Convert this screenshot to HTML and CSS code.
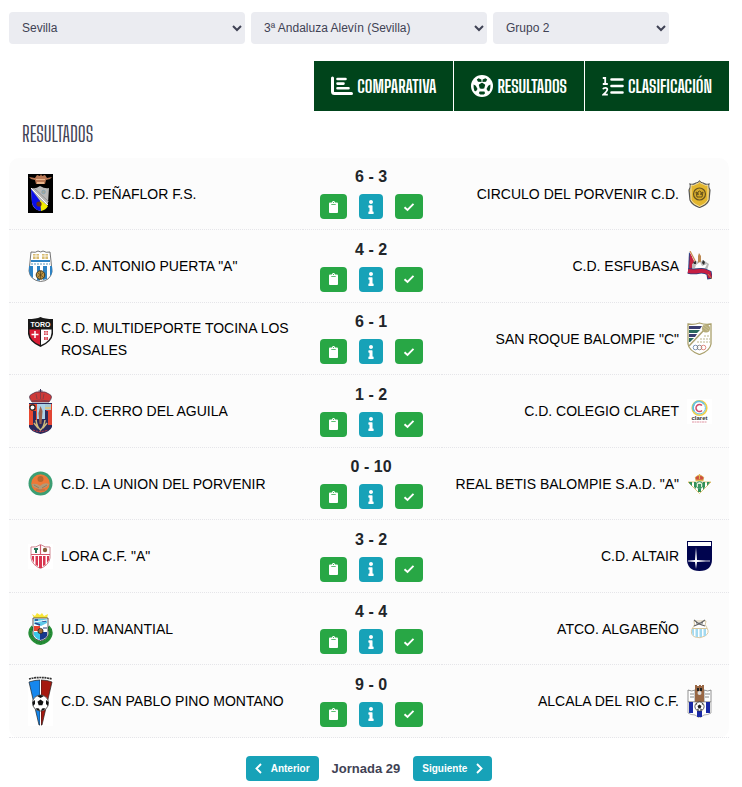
FILE: index.html
```html
<!DOCTYPE html>
<html lang="es">
<head>
<meta charset="UTF-8">
<meta name="viewport" content="width=device-width, initial-scale=1">
<title>Resultados</title>
<link rel="stylesheet" href="styles.css">
</head>
<body>

<!-- iconos compartidos -->
<svg class="sprite" aria-hidden="true">
  <symbol id="i-clip" viewBox="0 0 384 512"><path fill="currentColor" d="M384 112v352c0 26.500-21.500 48-48 48H48c-26.500 0-48-21.500-48-48V112c0-26.500 21.500-48 48-48h80c0-35.300 28.700-64 64-64s64 28.700 64 64h80c26.500 0 48 21.500 48 48zM192 40c-13.300 0-24 10.700-24 24s10.700 24 24 24 24-10.700 24-24-10.700-24-24-24m96 114v-20a6 6 0 0 0-6-6H102a6 6 0 0 0-6 6v20a6 6 0 0 0 6 6h180a6 6 0 0 0 6-6z"/></symbol>
  <symbol id="i-info" viewBox="0 0 192 512"><path fill="currentColor" d="M20 424.200h20V279.800H20c-11 0-20-9-20-20V212c0-11 9-20 20-20h112c11 0 20 9 20 20v212.200h20c11 0 20 9 20 20V492c0 11-9 20-20 20H20c-11 0-20-9-20-20v-47.800c0-11 9-20 20-20zM96 0C56.200 0 24 32.200 24 72s32.200 72 72 72 72-32.200 72-72S135.800 0 96 0z"/></symbol>
  <symbol id="i-check" viewBox="0 0 12 10"><path d="M1.500 5.200 4.500 8 10.500 1.800" fill="none" stroke="currentColor" stroke-width="1.900"/></symbol>
</svg>

<form class="filters">
  <select aria-label="Provincia"><option>Sevilla</option></select>
  <select aria-label="Competición"><option>3ª Andaluza Alevín (Sevilla)</option></select>
  <select class="short" aria-label="Grupo"><option>Grupo 2</option></select>
</form>

<nav class="tabs">
  <a href="#comparativa">
    <svg width="22" height="20" viewBox="0 0 22 20"><g fill="none" stroke="#fff" stroke-linecap="round"><path stroke-width="3" d="M1.500 2v13.500q0 2 2 2h17"/><path stroke-width="2.600" d="M6.500 3h8M6.500 7.600h6M6.500 12.200h11"/></g></svg>
    Comparativa
  </a>
  <a href="#resultados">
    <svg width="22" height="22" viewBox="0 0 22 22"><circle cx="11" cy="11" r="11" fill="#fff"/><path fill="#00441b" d="M11 7.400l3.300 2.400-1.200 3.900H8.900L7.700 9.800zM7.500 3.300l3.500 1.500 3.500-1.500 1.700 1.300-1.200 2.200-4 .3-4-.3-1.200-2.200zM2.600 9.500l2.200 1.200 1.700 3.400-1.500 2.200-1.500-.4Q2.300 13 2.600 9.500zM19.400 9.500l-2.200 1.200-1.700 3.400 1.500 2.200 1.500-.4q1.200-2.900.9-6.400zM8.600 16.500h4.800l.7 1.700-1.300 1.200H9.200l-1.300-1.200z"/><path fill="none" stroke="#fff" d="M11 8V4M8 10 4.500 8M14 10l3.500-2M9 13.500l-2.500 3M13 13.500l2.500 3"/></svg>
    Resultados
  </a>
  <a href="#clasificacion">
    <svg width="22" height="20" viewBox="0 0 22 20"><path stroke="#fff" stroke-width="2.600" stroke-linecap="round" d="M9.500 3.500h11M9.500 10h11M9.500 16.500h11"/><path fill="none" stroke="#fff" stroke-width="1.800" d="M.8 2h2.400v6M.8 8h5M1 13.200q.5-1.400 2.300-1.400 2 0 2 1.600 0 1.300-4 5.300h4.500"/></svg>
    Clasificación
  </a>
</nav>

<h1>Resultados</h1>

<table class="results">
  <tr>
    <td><div class="team">
      <svg width="25" height="39" viewBox="0 0 25 39"><path d="M0 0h25v39H0z"/><path fill="#b97855" d="M1 3l6 1 2-3 3 1 1-2 1 2 3-1 2 3 5-1-2 2-4 1-1 4H8L7 6 3 5z"/><path fill="#e9b58c" d="M8 5h9v1H8zM9 8h7v2H9z"/><path fill="#b9b9b9" d="M3 14q5 1 9-2 5 3 9 2l-1 15q-2 6-8 8-7-2-8-8z"/><path fill="#0b10e8" d="M3 15l10 13v9q-7-1-9-8z"/><path fill="#f4ee00" d="M12 26l8 6q-2 4-7 5z"/><path stroke="#fff" d="M3 14l17 17"/><path stroke="#777" stroke-width=".6" d="M6 14l15 14"/><circle cx="11" cy="30" r="2.600" fill="#6c3319"/><circle cx="15.500" cy="18" r="1.800" fill="#a6a79a" stroke="#6d9cb8" stroke-width=".6"/></svg>
      <span>C.D. PEÑAFLOR F.S.</span></div></td>
    <td class="match"><strong>6 - 3</strong><div class="actions">
      <button class="btn-clip" aria-label="Acta"><svg width="9" height="12"><use href="#i-clip"/></svg></button>
      <button class="btn-info" aria-label="Información"><svg width="6" height="14"><use href="#i-info"/></svg></button>
      <button class="btn-ok" aria-label="Validado"><svg width="12" height="10"><use href="#i-check"/></svg></button></div></td>
    <td><div class="team away"><span>CIRCULO DEL PORVENIR C.D.</span>
      <svg width="25" height="28" viewBox="0 0 25 28"><path fill="#e3b62e" stroke="#555" stroke-width="1.200" d="M3 4q4 1 6-1 2 0 3.500-2Q14 3 16 3q2 2 6 1-1 3 1 6l-1 10q-2 5-9.500 7.500Q5 25 3 20L2 10q2-3 1-6z"/><path fill="none" stroke="#fff" stroke-width=".6" d="M4 5q3 1 5-1 2 0 3.500-2Q14 4 16 4q2 2 5 1v15q-2 4-8.500 6.500Q6 24 4 20z"/><circle cx="12.500" cy="14" r="6" fill="#d5ab2c" stroke="#675322" stroke-width="1.200"/><path fill="none" stroke="#5b4819" stroke-width=".9" d="M9 12l1 5h5l1-5q-2 0-2 3 1-4-1.500-4T11 15q0-3-2-3z"/></svg></div></td>
  </tr>
  <tr>
    <td><div class="team">
      <svg width="25" height="32" viewBox="0 0 25 32"><path fill="#fff" stroke="#666" stroke-width=".9" d="M3 2q5 1 7-1 3 2 5 0 3 2 7 1l1 9 1 11q-2 9-11.500 9.500Q2 30 1 21l1-9z"/><path fill="#d9bc72" d="M5 4h6v5H5zM14 4h6v5h-6z"/><path stroke="#fff" stroke-width=".8" d="M8 3v6M5 6h15M17 3v6"/><path fill="#2c82c4" d="M3 10h19v2H3zM1 16h4v12q-4-3-4-8zM9 16h3v14.500H9zM15 16h4v13l-4 1zM22 16h2q1 8-2 10z"/><path stroke="#5895ba" d="M3 14h19" stroke-dasharray="2 1"/><circle cx="12.500" cy="25" r="4.300" fill="#ba9040" stroke="#443719" stroke-width="1"/><path stroke="#433617" stroke-width=".6" d="M10 23l5 4M15 23l-5 4M12.500 21v8"/></svg>
      <span>C.D. ANTONIO PUERTA "A"</span></div></td>
    <td class="match"><strong>4 - 2</strong><div class="actions">
      <button class="btn-clip" aria-label="Acta"><svg width="9" height="12"><use href="#i-clip"/></svg></button>
      <button class="btn-info" aria-label="Información"><svg width="6" height="14"><use href="#i-info"/></svg></button>
      <button class="btn-ok" aria-label="Validado"><svg width="12" height="10"><use href="#i-check"/></svg></button></div></td>
    <td><div class="team away"><span>C.D. ESFUBASA</span>
      <svg width="25" height="30" viewBox="0 0 25 30"><path fill="#243f87" d="M2 1l3 5v13l-4 3z"/><path fill="#c5213f" d="M3 2l4 8-3 9-2 1z"/><path stroke="#c58a4c" stroke-width="1.200" d="M3 0l10 19"/><path fill="#bd8952" d="M11 5l1-3 2 3v12h-3z"/><path fill="#bbb" d="M5 13l5-3 2 2 4-3 6 4-2 6H5z"/><path fill="#333" d="M6 11l3-1v3H7zM16 9l2 2-1 3-2-2z"/><path fill="#fff" d="M9 14l4-3 2 4 5-2-2 4H8z"/><path fill="none" stroke="#273e81" stroke-width="5.500" d="M1 20q6 1 11 0t10 2l1 6"/><path fill="none" stroke="#c51e42" stroke-width="4" d="M1 20q6 1 11 0t10 2l1 5"/><path stroke="#c58a4c" d="M21 23l4 5"/></svg></div></td>
  </tr>
  <tr>
    <td><div class="team top">
      <svg width="25" height="30" viewBox="0 0 25 30"><path fill="#191919" d="M0 2q8 0 12.500-2Q17 2 25 2v15q-1 8-12.500 13Q1 25 0 17z"/><path fill="#d91e35" d="M1.500 12.500H12V28Q2 24 1.500 16z"/><path fill="#fff" d="M13 12.500h10.500V16Q23 24 13 28z"/><text x="12.500" y="9.500" class="crest-text" fill="#fff">TORO</text><path stroke="#fff" stroke-width="1.500" d="M7 14v7M3.500 17.500h7"/><path fill="#d84c58" d="M16 14h4v4h-4zM16 20h4v3h-4z"/><path stroke="#fff" stroke-width=".6" d="M18 14v9M16 16h4"/></svg>
      <span>C.D. MULTIDEPORTE TOCINA LOS ROSALES</span></div></td>
    <td class="match"><strong>6 - 1</strong><div class="actions">
      <button class="btn-clip" aria-label="Acta"><svg width="9" height="12"><use href="#i-clip"/></svg></button>
      <button class="btn-info" aria-label="Información"><svg width="6" height="14"><use href="#i-info"/></svg></button>
      <button class="btn-ok" aria-label="Validado"><svg width="12" height="10"><use href="#i-check"/></svg></button></div></td>
    <td><div class="team away"><span>SAN ROQUE BALOMPIE "C"</span>
      <svg width="25" height="33" viewBox="0 0 25 33"><path fill="#fff" stroke="#aaa06c" stroke-width="1.300" d="M1 2q6 1 11.500-1Q18 3 24 2v20q-1 7-11.500 10.500Q2 29 1 22z"/><path fill="#3a3d70" d="M2 4h13l-2 3H2zM2 12h8l-2 3H2z"/><path fill="#28695d" d="M2 8h11l-3 3H2zM2 16h5l-4 4H2z"/><path stroke="#aba171" stroke-width="1.500" d="M18 7L2 24"/><circle cx="19" cy="6.500" r="4" fill="#b6ac7a"/><path stroke="#d9d2aa" stroke-width=".5" d="M16 5l5 4M17 3l5 4"/><path stroke="#bbb58e" stroke-dasharray="2 1" d="M17 14h6M13 17h10M10 20h13"/><g fill="none" stroke-width=".8"><circle cx="8.500" cy="25.500" r="2.300" stroke="#5b7ba6"/><circle cx="12.500" cy="25.500" r="2.300" stroke="#777"/><circle cx="16.500" cy="25.500" r="2.300" stroke="#d87167"/></g></svg></div></td>
  </tr>
  <tr>
    <td><div class="team">
      <svg width="25" height="45" viewBox="0 0 25 45"><path stroke="#3d365a" d="M12.500 0v4M10.500 2h4"/><path fill="#ce3938" stroke="#44324b" stroke-width=".7" d="M4 13q-5-6 0-8 4-3 8.500-2Q17 2 21 5q5 2 0 8z"/><path stroke="#774048" stroke-width=".8" fill="none" d="M4 12q8-2 17 0M8 5l1 5M16 5l-1 5M12.500 4v6"/><path fill="#29295b" d="M1 14h23v24q-2 5-11.500 7Q3 43 1 38z"/><path fill="#e9482f" d="M1 15h8v21H1z"/><path fill="#e24534" d="M18 15h6v21h-5z"/><path fill="#abd2e9" d="M9 15h8v15H9z"/><circle cx="4.500" cy="18.500" r="2.600" fill="#fff" stroke="#222" stroke-width="1.200"/><path fill="#a5c9d1" d="M17 15h6v6h-6z"/><path fill="#d7c589" d="M17 18h6v2h-6z"/><path fill="#2c2b5b" d="M5 22h3v15H5zM17 22h3v15h-3z"/><path fill="#98614b" d="M12.500 17l2 5-1 13h-2l-1-11z"/><path fill="none" stroke="#ccb97f" stroke-width="1.500" d="M8 31q1 7 4.500 10Q16 38 17 31M6 34l4 5M19 34l-4 5"/><path stroke="#c13b45" stroke-dasharray="2 1" d="M5 41q7 3 15 0" fill="none"/></svg>
      <span>A.D. CERRO DEL AGUILA</span></div></td>
    <td class="match"><strong>1 - 2</strong><div class="actions">
      <button class="btn-clip" aria-label="Acta"><svg width="9" height="12"><use href="#i-clip"/></svg></button>
      <button class="btn-info" aria-label="Información"><svg width="6" height="14"><use href="#i-info"/></svg></button>
      <button class="btn-ok" aria-label="Validado"><svg width="12" height="10"><use href="#i-check"/></svg></button></div></td>
    <td><div class="team away"><span>C.D. COLEGIO CLARET</span>
      <svg width="25" height="25" viewBox="0 0 25 25"><path fill="#fff" d="M0 0h25v25H0z"/><circle cx="12.500" cy="9" r="7.300" fill="none" stroke="#efcf4a" stroke-width="1.600"/><path fill="none" stroke="#65c1e2" stroke-width="1.700" d="M7 12a6 6 0 0 1 10-7"/><path fill="none" stroke="#60bcdb" d="M7.500 5.500a6 6 0 1 0 9-1"/><path fill="none" stroke="#cf4968" stroke-width="1.600" d="M15 6.500a3.500 3.500 0 1 0 0 5"/><text x="12.500" y="21" class="crest-text small" fill="#333">claret</text><path stroke="#d1697b" stroke-width=".7" stroke-dasharray="2 .5" d="M5 23h15"/></svg></div></td>
  </tr>
  <tr>
    <td><div class="team">
      <svg width="25" height="25" viewBox="0 0 25 25"><circle cx="12.500" cy="12.500" r="12" fill="#36a176"/><circle cx="12.500" cy="12.500" r="9.200" fill="#ed7837"/><circle cx="12.500" cy="12.500" r="10.700" fill="none" stroke="#5a916b" stroke-dasharray="1 1.500"/><circle cx="12.500" cy="8" r="3" fill="#b6662f"/><path fill="#b29a78" d="M4 13q5-1 8 2 4-4 9-2-2 4-6 4l-3 2-3-2q-4 0-5-4z"/><path stroke="#8c7559" stroke-width=".8" d="M6 14l5 3M19 14l-5 3M8 19h9"/></svg>
      <span>C.D. LA UNION DEL PORVENIR</span></div></td>
    <td class="match"><strong>0 - 10</strong><div class="actions">
      <button class="btn-clip" aria-label="Acta"><svg width="9" height="12"><use href="#i-clip"/></svg></button>
      <button class="btn-info" aria-label="Información"><svg width="6" height="14"><use href="#i-info"/></svg></button>
      <button class="btn-ok" aria-label="Validado"><svg width="12" height="10"><use href="#i-check"/></svg></button></div></td>
    <td><div class="team away"><span>REAL BETIS BALOMPIE S.A.D. "A"</span>
      <svg width="25" height="20" viewBox="0 0 25 20"><path fill="#fff" stroke="#d8b55b" stroke-width=".8" d="M1 8h23L12.500 19.500z"/><path fill="#329057" d="M2 8h3v4L2 9zM7 8h2v7l-2-2zM11 8h3v10h-3zM16 8h2v5l-2 3zM20 8h3l-3 4z"/><circle cx="12.500" cy="11" r="3.400" fill="#e5efd9" stroke="#3c9661"/><path fill="#3c9661" d="M11 10h3v4h-3z"/><path fill="#ce4c43" stroke="#d8ad46" stroke-width=".8" d="M9 6q-2-3 1-4l2.500-1L15 2q3 1 1 4z"/><path stroke="#dfb950" stroke-width="1.200" d="M8.500 6.500h8M12.500 0v5"/></svg></div></td>
  </tr>
  <tr>
    <td><div class="team">
      <svg width="25" height="25" viewBox="0 0 25 25"><path fill="#fff" d="M0 0h25v25H0z"/><path fill="#fff" stroke="#cb7b86" stroke-width=".9" d="M3 3q5 1 9.500-2.500Q17 4 22 3v11q-1 7-9.500 10.500Q4 21 3 14z"/><path fill="#d93650" d="M4 12h2v7l-2-4zM7.500 12h2.500v10l-2.500-1zM11 12h3v12h-3zM15 12h2.500v9L15 22zM19 12h2v4l-2 3z"/><path stroke="#d55b6e" stroke-width="1.200" d="M3 10.500h19M12.500 1v9"/><path fill="#297659" d="M6 4h4v2H6zM7 6h2v3H7z"/><circle cx="17" cy="6" r="2.200" fill="#86613b"/></svg>
      <span>LORA C.F. "A"</span></div></td>
    <td class="match"><strong>3 - 2</strong><div class="actions">
      <button class="btn-clip" aria-label="Acta"><svg width="9" height="12"><use href="#i-clip"/></svg></button>
      <button class="btn-info" aria-label="Información"><svg width="6" height="14"><use href="#i-info"/></svg></button>
      <button class="btn-ok" aria-label="Validado"><svg width="12" height="10"><use href="#i-check"/></svg></button></div></td>
    <td><div class="team away"><span>C.D. ALTAIR</span>
      <svg width="25" height="30" viewBox="0 0 25 30"><path fill="#00044e" d="M0 0h25v18q0 12-12.500 12T0 18z"/><path fill="#fff" d="M1 1h23v4H1zM9 6l1 13 9 1-9 1-1 7-1-7-7-1 7-1z"/><path fill="#fff" d="M1 19.500h22v1H1z" opacity=".8"/></svg></div></td>
  </tr>
  <tr>
    <td><div class="team">
      <svg width="25" height="32" viewBox="0 0 25 32"><path fill="#f8e638" d="M4 1l3 2 2-3 3 2 2-2 2 3 4-2-1 4H6z"/><path fill="none" stroke="#279038" stroke-width="4" d="M5 14q-4 4-2 9 3 6 9.500 7 7-1 9.500-7 2-5-2-9"/><path fill="none" stroke="#1b6d29" stroke-dasharray="1 1.500" d="M5 14q-4 4-2 9 3 6 9.500 7 7-1 9.500-7 2-5-2-9"/><path fill="#fff" stroke="#333" stroke-width=".8" d="M5 5h15v18q-2 4-7.500 5Q7 27 5 23z"/><path fill="#5fc9e8" d="M6 6h13v4l-6 3-7-2z"/><path stroke="#29448f" stroke-width="1.500" d="M7 7h3M14 8h4M7 10l5 2"/><path stroke="#fff" d="M6 9l13-2"/><path fill="#e74430" d="M6 13h6v5H6z"/><path fill="#3cc8e8" d="M6 19h6v8q-5-2-6-5z"/><path fill="#18388c" d="M12 19h7v4q-2 3-7 4z"/><circle cx="12.500" cy="18" r="2.600" fill="#a66c34" stroke="#222" stroke-width=".8"/><path stroke="#263f78" d="M15 15h4"/></svg>
      <span>U.D. MANANTIAL</span></div></td>
    <td class="match"><strong>4 - 4</strong><div class="actions">
      <button class="btn-clip" aria-label="Acta"><svg width="9" height="12"><use href="#i-clip"/></svg></button>
      <button class="btn-info" aria-label="Información"><svg width="6" height="14"><use href="#i-info"/></svg></button>
      <button class="btn-ok" aria-label="Validado"><svg width="12" height="10"><use href="#i-check"/></svg></button></div></td>
    <td><div class="team away"><span>ATCO. ALGABEÑO</span>
      <svg width="25" height="20" viewBox="0 0 25 20"><path fill="#fff" stroke="#d9c9a4" d="M7 2q2 4-2 8-2 6 3 8 5 2 10-1 5-3 2-8-3-3-1-7z"/><path fill="#a3d9ef" d="M5 10h2v7q-2-1-2-4zM8.500 10h2.500v8H8.500zM12.500 10H15v8h-2.500zM16.500 10H19v7h-2.500z"/><path fill="none" stroke="#666" stroke-width="1.200" d="M7 1l5 4 6-4M7 7l5-2 6 2M9 4h7"/><path stroke="#d8c79a" d="M5 9.500h15"/></svg></div></td>
  </tr>
  <tr>
    <td><div class="team">
      <svg width="25" height="50" viewBox="0 0 25 50"><path fill="#fff" d="M0 0h25v50H0z"/><path fill="none" stroke="#333" stroke-width="1.700" stroke-dasharray="2 .6" d="M1 3q11-3 23 0"/><path fill="#1687ee" stroke="#222" stroke-width=".7" d="M1 6q6-2 11-2v45h-1z"/><path fill="#a5180f" stroke="#222" stroke-width=".7" d="M13 4q6 0 11 2L14 49h-1z"/><path stroke="#fff" d="M12.500 4v46"/><circle cx="12.500" cy="27" r="8" fill="#fff" stroke="#444" stroke-width=".8"/><path fill="#111" d="M12.500 23.500l3 2.200-1.200 3.600h-3.600l-1.200-3.600zM9 20l3.500-1 3.500 1-3.500 2zM4.500 26l2.500-2v4l-2 2zM20.500 26L18 24v4l2 2zM8 32l3 .5 1 2.200-3-.7zM17 32l-3 .5-1 2.200 3-.7z"/></svg>
      <span>C.D. SAN PABLO PINO MONTANO</span></div></td>
    <td class="match"><strong>9 - 0</strong><div class="actions">
      <button class="btn-clip" aria-label="Acta"><svg width="9" height="12"><use href="#i-clip"/></svg></button>
      <button class="btn-info" aria-label="Información"><svg width="6" height="14"><use href="#i-info"/></svg></button>
      <button class="btn-ok" aria-label="Validado"><svg width="12" height="10"><use href="#i-check"/></svg></button></div></td>
    <td><div class="team away"><span>ALCALA DEL RIO C.F.</span>
      <svg width="25" height="33" viewBox="0 0 25 33"><path fill="#fff" stroke="#777" stroke-width=".8" d="M1 5q4 2 7 0v12H1zM17 5q4 2 7 0v12h-7z"/><path stroke="#888" d="M3 9h4M3 12h4M18 9h5M18 12h4"/><path fill="#996744" d="M8 0h2v1h2V0h2v1h1V0h2v17H8z"/><path fill="#222" d="M10 3h2v3h-2zM13 3h2v3h-2z"/><circle cx="12.500" cy="8" r="2" fill="#ddd"/><path fill="#fff" stroke="#777" stroke-width=".6" d="M1 17h23v11q-3 2-7 2l-4.500 3L8 30q-4 0-7-2z"/><path fill="#1929a5" d="M2 17h4v11H2zM10 26h5v6h-5zM19 17h4v11h-4z"/><circle cx="12.500" cy="21.500" r="4.600" fill="#fff" stroke="#333" stroke-width=".8"/><path fill="#222" d="M12.500 19.500l2 1.500-1 2.500h-2l-1-2.500zM8.500 20l1-2 1 1zM16.500 20l-1-2-1 1zM10 25l1-1.500 1 2zM15 25l-1-1.500-1 2z"/></svg></div></td>
  </tr>
</table>

<div class="pager">
  <button><svg width="7" height="11" viewBox="0 0 7 11"><path d="M6 1 1.500 5.500 6 10" fill="none" stroke="#fff" stroke-width="1.900"/></svg>Anterior</button>
  <span>Jornada 29</span>
  <button>Siguiente<svg width="7" height="11" viewBox="0 0 7 11"><path d="M1 1l4.500 4.500L1 10" fill="none" stroke="#fff" stroke-width="1.900"/></svg></button>
</div>

</body>
</html>
```

FILE: styles.css
```css
body {
  margin: 0;
  padding: 12px 13px 0 9px;
  background: #fff;
  color: #3f4254;
  font-family: "Liberation Sans", Arial, sans-serif;
  font-size: 14px;
}
.sprite {
  display: none;
}
.filters {
  display: flex;
  gap: 6px;
}
.filters select {
  flex: 0 1 236px;
  min-width: 0;
  height: 32px;
  padding: 0 0 0 9px;
  border: 0;
  border-radius: 4px;
  background-color: #ebecf1;
  color: #3f4254;
  font-family: inherit;
  font-size: 12px;
}
.filters .short {
  flex-basis: 176px;
}

.tabs {
  display: flex;
  justify-content: flex-end;
  gap: 1px;
  margin-top: 17px;
}
.tabs a {
  display: flex;
  align-items: center;
  gap: 4px;
  height: 50px;
  padding: 0 17px;
  background: #00441b;
  color: #fff;
  font-family: "Big Shoulders Display", "Roboto Condensed", "Liberation Sans Narrow", "Liberation Sans", sans-serif;
  font-size: 18px;
  font-weight: bold;
  text-decoration: none;
  text-transform: uppercase;
}
h1 {
  margin: 12px 13px 13px;
  font-family: "Big Shoulders Display", "Roboto Condensed", "Liberation Sans Narrow", "Liberation Sans", sans-serif;
  font-size: 22px;
  font-weight: normal;
  line-height: 22px;
  text-transform: uppercase;
}

.results {
  width: 100%;
  table-layout: fixed;
  border-spacing: 0;
  border-radius: 10px;
  background: #fcfcfc;
}
.results td {
  width: 40%;
  height: 71px;
  padding: 0;
  border-bottom: 1px dotted #e5e5e9;
}
.results tr:nth-child(even) td {
  height: 72px;
}
.results td:first-child {
  width: 41%;
}
.results .match {
  width: 19%;
  padding-right: 3px;
  text-align: center;
}
.match strong {
  display: block;
  color: #212529;
  font-size: 16px;
  line-height: 22px;
}
.team {
  display: flex;
  align-items: center;
  gap: 8px;
  padding: 0 10px 0 19px;
  color: #000;
  line-height: 22px;
}
.team svg {
  flex: none;
}
.team.top {
  align-items: flex-start;
}
.team.away {
  justify-content: flex-end;
  padding: 0 17px 0 10px;
  text-align: right;
}
.crest-text {
  font-family: "Liberation Sans", sans-serif;
  font-size: 7px;
  font-weight: bold;
  text-anchor: middle;
}
.crest-text.small {
  font-size: 6px;
}
.actions {
  display: flex;
  justify-content: center;
  gap: 12px;
  margin: 6px 0 2px;
}

button {
  display: flex;
  align-items: center;
  justify-content: center;
  height: 25px;
  padding: 0 9px;
  border: 0;
  border-radius: 4px;
  background: #17a2b8;
  color: #fff;
  font-family: inherit;
  font-size: 10px;
  font-weight: bold;
}
.btn-clip {
  background: #28a745;
}
.btn-ok {
  padding: 0 8px;
  background: #28a745;
}

.pager {
  display: flex;
  align-items: center;
  justify-content: center;
  gap: 13px;
  margin-top: 18px;
  font-size: 13px;
  font-weight: bold;
}
.pager button {
  gap: 9px;
}
```
